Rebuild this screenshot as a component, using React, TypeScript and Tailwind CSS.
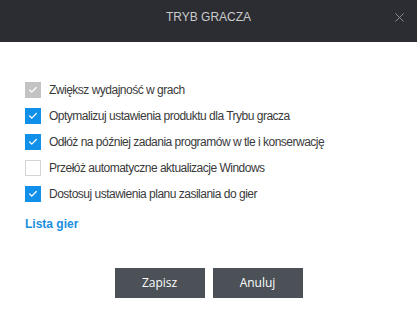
import { Check, X } from 'lucide-react'

const options = [
  { label: 'Zwiększ wydajność w grach', state: 'disabled' },
  { label: 'Optymalizuj ustawienia produktu dla Trybu gracza', state: 'checked' },
  { label: 'Odłóż na później zadania programów w tle i konserwację', state: 'checked' },
  { label: 'Przełóż automatyczne aktualizacje Windows', state: 'unchecked' },
  { label: 'Dostosuj ustawienia planu zasilania do gier', state: 'checked' },
]

function Box({ state }: { state: string }) {
  if (state === 'unchecked') {
    return <span className="h-4 w-4 shrink-0 border border-[#d4d4d4] bg-white" />
  }
  return (
    <span
      className={
        state === 'disabled'
          ? 'flex h-4 w-4 shrink-0 items-center justify-center bg-[#c3c3c3]'
          : 'flex h-4 w-4 shrink-0 items-center justify-center bg-[#1190ea]'
      }
    >
      <Check className="h-2.5 w-2.5 text-white" strokeWidth={3} />
    </span>
  )
}

export default function App() {
  return (
    <div className="h-[319px] w-[417px] bg-white font-['Liberation_Sans',Arial,sans-serif]">
      <div className="relative h-[42px] bg-[#2b2d32] pt-[9px] text-center text-[12px] leading-4 text-[#c9cacc]">
        TRYB GRACZA
        <button className="absolute right-[10px] top-[10px] text-[#8e9094]">
          <X className="h-[15px] w-[15px]" strokeWidth={1.5} />
        </button>
      </div>

      <div className="flex flex-col gap-[10px] pl-[25px] pt-[40px]">
        {options.map((o) => (
          <label
            key={o.label}
            className="flex h-4 items-center gap-[8px] text-[12px] tracking-[-0.5px] text-[#3a3a3a]"
          >
            <Box state={o.state} />
            {o.label}
          </label>
        ))}
      </div>

      <a className="ml-[25px] mt-[13px] block text-[12px] font-bold text-[#1a8fdf]">Lista gier</a>

      <div className="mt-[35px] flex justify-center gap-2 font-['Open_Sans',sans-serif] text-[12px] text-white">
        <button className="h-[30px] w-[90px] bg-[#4b5157]">Zapisz</button>
        <button className="h-[30px] w-[90px] bg-[#4b5157]">Anuluj</button>
      </div>
    </div>
  )
}
